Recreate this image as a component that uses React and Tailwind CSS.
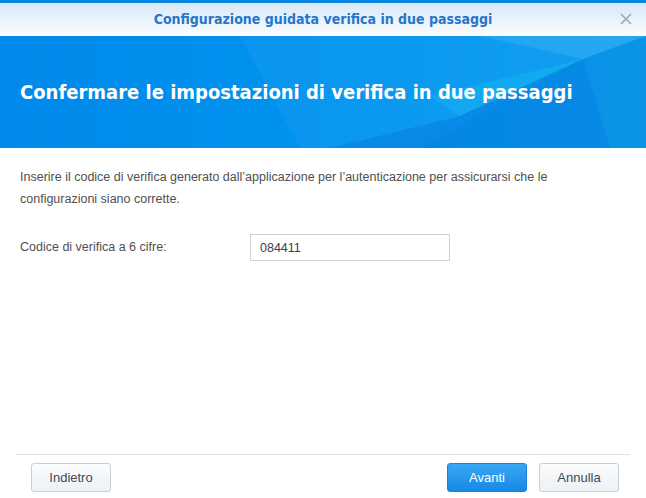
import React from 'react';

// Two-step verification wizard dialog

function Banner() {
  return (
    <div className="relative h-[112px] bg-[#0089ea] overflow-hidden">
      <svg className="absolute inset-0" width="646" height="112" viewBox="0 0 646 112">
        <defs>
          <linearGradient id="bg" x1="0" y1="0" x2="1" y2="0">
            <stop offset="0" stopColor="#0089ea" />
            <stop offset="0.5" stopColor="#0093f0" />
            <stop offset="1" stopColor="#0a9cf0" />
          </linearGradient>
        </defs>
        <rect width="646" height="112" fill="url(#bg)" />
        <polygon points="240,0 480,0 583,23 420,112 300,112" fill="#ffffff" opacity="0.04" />
        <polygon points="480,0 646,0 583,23" fill="#ffffff" opacity="0.12" />
        <polygon points="430,60 583,23 460,80" fill="#14b4f0" opacity="0.55" />
        <polygon points="583,23 646,0 646,112 610,112" fill="#0c8fe0" opacity="0.6" />
        <polygon points="583,23 610,112 400,112 460,80" fill="#0576d6" opacity="0.45" />
        <polygon points="460,80 400,112 330,112" fill="#0570d2" opacity="0.35" />
      </svg>
      <h1 className="relative pt-[46px] pl-5 text-[20px] font-bold text-white font-['DejaVu_Sans_Condensed','Liberation_Sans',sans-serif] leading-none">
        Confermare le impostazioni di verifica in due passaggi
      </h1>
    </div>
  );
}

function Button({ children, primary }) {
  return (
    <button
      type="button"
      className={
        primary
          ? 'w-20 h-[29px] rounded-[3px] border border-[#1883d8] bg-gradient-to-b from-[#38a7f6] to-[#1589e4] text-white text-[13px]'
          : 'w-20 h-[29px] rounded-[3px] border border-[#c6d0da] bg-gradient-to-b from-[#fbfcfd] to-[#edf1f5] text-[#404a54] text-[13px]'
      }
    >
      {children}
    </button>
  );
}

export default function App() {
  return (
    <div className="w-[646px] h-[498px] bg-white flex flex-col font-['Liberation_Sans',Arial,sans-serif]">
      <header className="h-9 border-t-[3px] border-[#0a86e0] bg-gradient-to-b from-[#d8e8f8] to-[#fbfdff] flex items-center justify-center relative">
        <span className="text-[14px] font-bold text-[#2576cc] font-['DejaVu_Sans_Condensed','Liberation_Sans',sans-serif]">
          Configurazione guidata verifica in due passaggi
        </span>
        <svg className="absolute right-[14px] top-[10px]" width="12" height="12" viewBox="0 0 12 12">
          <path d="M1 1 L11 11 M11 1 L1 11" stroke="#9ea7b0" strokeWidth="1.6" />
        </svg>
      </header>
      <Banner />
      <main className="flex-1 px-5 pt-[18px] text-[12.5px] text-[#505050]">
        <p className="leading-[22px]">
          Inserire il codice di verifica generato dall’applicazione per l’autenticazione per assicurarsi che le
          <br />
          configurazioni siano corrette.
        </p>
        <div className="mt-6 flex items-center">
          <label className="w-[230px]">Codice di verifica a 6 cifre:</label>
          <input
            className="w-[200px] h-[27px] border border-[#c9d3dd] px-[9px] text-[12.5px] text-[#404040] outline-none"
            defaultValue="084411"
          />
        </div>
      </main>
      <footer className="mx-4 border-t border-[#e2e4e6] pt-2 pb-[6px] pl-[15px] pr-[11px] flex items-center">
        <Button>Indietro</Button>
        <div className="flex-1" />
        <div className="flex gap-3">
          <Button primary>Avanti</Button>
          <Button>Annulla</Button>
        </div>
      </footer>
    </div>
  );
}
